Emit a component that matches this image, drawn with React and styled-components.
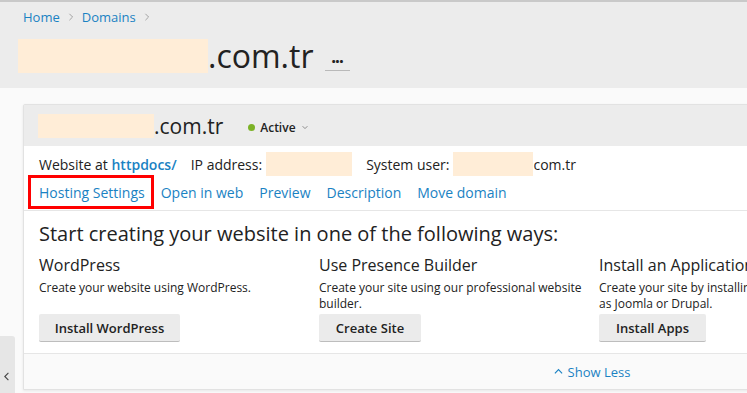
import React from "react";
import styled, { createGlobalStyle } from "styled-components";

const GlobalStyle = createGlobalStyle`
  body {
    margin: 0;
    overflow: hidden;
    background: #fafafa;
    font-family: "Open Sans", "Liberation Sans", sans-serif;
    color: #222;
  }
`;

const Page = styled.div`
  min-height: 393px;
  border-top: 2px solid #c9c9c9;
`;

const Header = styled.div`
  background: #ececec;
  height: 86px;
  padding: 0 23px;
  box-sizing: border-box;
`;

const Crumbs = styled.div`
  display: flex;
  align-items: center;
  gap: 6px;
  height: 30px;
  font-size: 13px;
`;

const Link = styled.a`
  color: #1a82c3;
  text-decoration: none;
  font-weight: ${(p) => (p.$bold ? 600 : 400)};
  position: relative;
  white-space: nowrap;
  &::after {
    content: "";
    display: ${(p) => (p.$marked ? "block" : "none")};
    position: absolute;
    left: -11px;
    right: -9px;
    top: -8px;
    bottom: -7px;
    border: 3px solid #f00;
  }
`;

const Sep = styled.svg`
  width: 8px;
  height: 10px;
  margin: 0 1px;
`;

const TitleRow = styled.div`
  display: flex;
  align-items: center;
  height: 40px;
  margin-top: 4px;
  margin-left: -5px;
`;

const Mask = styled.span`
  display: inline-block;
  background: #ffedd7;
  width: ${(p) => p.$w}px;
  height: ${(p) => p.$h}px;
  margin-left: ${(p) => p.$ml || 0}px;
`;

const BigDomain = styled.span`
  font-size: 32px;
  line-height: 40px;
  color: #222;
`;

const MoreButton = styled.span`
  margin-left: 11px;
  margin-top: 12px;
  width: 25px;
  height: 16px;
  border-bottom: 1px solid #b9b9b9;
  display: flex;
  align-items: center;
  justify-content: center;
  font-size: 17px;
  font-weight: 700;
  letter-spacing: -1px;
  line-height: 10px;
`;

const Main = styled.div`
  padding: 16px 0 0 23px;
`;

const Card = styled.div`
  width: 1134px;
  background: #fff;
  border: 1px solid #e2e2e2;
  border-radius: 2px 0 0 0;
  box-shadow: 0 1px 3px rgba(0, 0, 0, 0.08);
`;

const CardHeader = styled.div`
  display: flex;
  align-items: center;
  height: 41px;
  padding: 0 14px;
  background: #ececec;
`;

const CardDomain = styled.span`
  font-size: 21px;
  line-height: 24px;
  color: #222;
`;

const Status = styled.span`
  display: flex;
  align-items: center;
  gap: 5px;
  margin-left: 25px;
  margin-top: 3px;
  font-size: 12px;
  font-weight: 600;
`;

const Dot = styled.span`
  width: 7px;
  height: 7px;
  border-radius: 50%;
  background: #7cb227;
`;

const InfoRow = styled.div`
  display: flex;
  align-items: center;
  height: 24px;
  padding: 6px 15px 0;
  font-size: 14px;
  white-space: nowrap;
`;

const InfoItem = styled.span`
  display: flex;
  align-items: center;
  margin-right: ${(p) => p.$gap || 0}px;
`;

const Actions = styled.div`
  display: flex;
  gap: 16px;
  height: 30px;
  align-items: center;
  padding: 0 15px;
  font-size: 14px;
  border-bottom: 1px solid #e6e6e6;
  margin-top: 1px;
  padding-bottom: 3px;
`;

const Body = styled.div`
  padding: 10px 15px 11px;
  border-bottom: 1px solid #e6e6e6;
`;

const Lead = styled.h2`
  margin: 0;
  font-size: 20px;
  font-weight: 400;
  line-height: 26px;
  color: #222;
`;

const Ways = styled.div`
  display: grid;
  grid-template-columns: repeat(3, 280px);
  margin-top: 8px;
`;

const Way = styled.div`
  display: flex;
  flex-direction: column;
  align-items: flex-start;
  padding-right: 8px;
`;

const WayTitle = styled.h3`
  margin: 0;
  font-size: 16px;
  font-weight: 400;
  line-height: 20px;
  color: #222;
  white-space: nowrap;
`;

const WayText = styled.p`
  margin: 5px 0 0;
  font-size: 12px;
  line-height: 16px;
  height: 32px;
  color: #222;
`;

const Button = styled.button`
  margin-top: 2px;
  height: 28px;
  width: ${(p) => p.$w}px;
  border: 0;
  border-bottom: 1px solid #bdbdbd;
  border-radius: 2px;
  background: #ebebeb;
  font-family: inherit;
  font-size: 13px;
  font-weight: 600;
  color: #222;
`;

const Footer = styled.div`
  display: flex;
  justify-content: center;
  align-items: center;
  height: 35px;
  background: #fafafa;
  font-size: 13px;
`;

const Toggle = styled.span`
  display: flex;
  align-items: center;
  gap: 5px;
  color: #1a82c3;
  margin-left: 2px;
`;

const SideTab = styled.div`
  position: fixed;
  left: 0;
  bottom: 0;
  width: 15px;
  height: 57px;
  background: #e6e6e6;
  border-radius: 0 3px 0 0;
  display: flex;
  align-items: flex-end;
  justify-content: center;
  padding-bottom: 12px;
  box-sizing: border-box;
`;

const NoWrapLine = styled.span`
  display: block;
  white-space: nowrap;
`;

const Chevron = ({ dir = "right", size = 8, color = "#999", width = 1.2 }) => {
  const d = {
    right: "M3 1 L7 5 L3 9",
    left: "M6 1 L2 5 L6 9",
    up: "M1 7 L5 3 L9 7",
    down: "M2 4 L5 7 L8 4",
  }[dir];
  return (
    <svg width={size} height={size} viewBox="0 0 10 10" fill="none">
      <path d={d} stroke={color} strokeWidth={width} />
    </svg>
  );
};

const ways = [
  {
    title: "WordPress",
    text: "Create your website using WordPress.",
    button: "Install WordPress",
    w: 141,
  },
  {
    title: "Use Presence Builder",
    text: "Create your site using our professional website builder.",
    button: "Create Site",
    w: 102,
  },
  {
    title: "Install an Application",
    lines: ["Create your site by installing applications such", "as Joomla or Drupal."],
    button: "Install Apps",
    w: 107,
  },
];

export default function App() {
  return (
    <Page>
      <GlobalStyle />
      <Header>
        <Crumbs>
          <Link>Home</Link>
          <Sep viewBox="0 0 10 10" fill="none">
            <path d="M3 1 L7 5 L3 9" stroke="#999" strokeWidth="1.1" />
          </Sep>
          <Link>Domains</Link>
          <Sep viewBox="0 0 10 10" fill="none">
            <path d="M3 1 L7 5 L3 9" stroke="#999" strokeWidth="1.1" />
          </Sep>
        </Crumbs>
        <TitleRow>
          <Mask $w={190} $h={34} />
          <BigDomain>.com.tr</BigDomain>
          <MoreButton>···</MoreButton>
        </TitleRow>
      </Header>
      <Main>
        <Card>
          <CardHeader>
            <Mask $w={116} $h={24} />
            <CardDomain>.com.tr</CardDomain>
            <Status>
              <Dot />
              Active
              <Chevron dir="down" size={8} color="#888" />
            </Status>
          </CardHeader>
          <InfoRow>
            <InfoItem $gap={14}>
              Website at&nbsp;<Link $bold>httpdocs/</Link>
            </InfoItem>
            <InfoItem $gap={14}>
              IP address:
              <Mask $w={86} $h={24} $ml={4} />
            </InfoItem>
            <InfoItem>
              System user:
              <Mask $w={80} $h={24} $ml={4} />
              com.tr
            </InfoItem>
          </InfoRow>
          <Actions>
            <Link $marked>Hosting Settings</Link>
            <Link>Open in web</Link>
            <Link>Preview</Link>
            <Link>Description</Link>
            <Link>Move domain</Link>
          </Actions>
          <Body>
            <Lead>Start creating your website in one of the following ways:</Lead>
            <Ways>
              {ways.map((w) => (
                <Way key={w.title}>
                  <WayTitle>{w.title}</WayTitle>
                  <WayText>
                    {w.lines
                      ? w.lines.map((l) => <NoWrapLine key={l}>{l}</NoWrapLine>)
                      : w.text}
                  </WayText>
                  <Button $w={w.w}>{w.button}</Button>
                </Way>
              ))}
            </Ways>
          </Body>
          <Footer>
            <Toggle>
              <Chevron dir="up" size={9} color="#1a82c3" width={1.3} />
              Show Less
            </Toggle>
          </Footer>
        </Card>
      </Main>
      <SideTab>
        <Chevron dir="left" size={9} color="#444" width={1.2} />
      </SideTab>
    </Page>
  );
}
